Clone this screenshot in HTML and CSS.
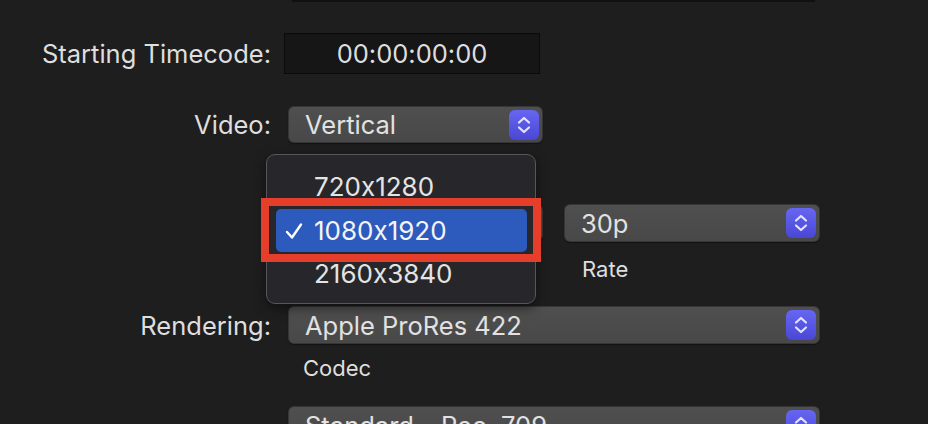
FILE: index.html
```html
<!DOCTYPE html>
<html>
<head>
<meta charset="utf-8">
<link rel="stylesheet" href="styles.css">
</head>
<body>
<div class="panel">
  <div class="prev-field"></div>

  <div class="row row-timecode">
    <div class="label">Starting Timecode:</div>
    <div class="timecode">00:00:00:00</div>
  </div>

  <div class="row row-video">
    <div class="label">Video:</div>
    <div class="popup popup-short">
      <span class="popup-text">Vertical</span>
      <span class="stepper"><svg viewBox="0 0 30 30" width="30" height="30"><path d="M10 12.5 L15 8 L20 12.5 M10 17.5 L15 22 L20 17.5" fill="none" stroke="#e4e3ff" stroke-width="2.2" stroke-linecap="round" stroke-linejoin="round"/></svg></span>
    </div>
  </div>

  <div class="row row-format">
    <div class="label"></div>
    <div class="pair">
      <div class="popup popup-short">
        <span class="popup-text"></span>
        <span class="stepper"><svg viewBox="0 0 30 30" width="30" height="30"><path d="M10 12.5 L15 8 L20 12.5 M10 17.5 L15 22 L20 17.5" fill="none" stroke="#e4e3ff" stroke-width="2.2" stroke-linecap="round" stroke-linejoin="round"/></svg></span>
      </div>
      <div class="popup popup-rate">
        <span class="popup-text">30p</span>
        <span class="stepper"><svg viewBox="0 0 30 30" width="30" height="30"><path d="M10 12.5 L15 8 L20 12.5 M10 17.5 L15 22 L20 17.5" fill="none" stroke="#e4e3ff" stroke-width="2.2" stroke-linecap="round" stroke-linejoin="round"/></svg></span>
      </div>
    </div>
  </div>
  <div class="row sub-row">
    <div class="label"></div>
    <div class="pair">
      <div class="sublabel sub-res"></div>
      <div class="sublabel sub-rate">Rate</div>
    </div>
  </div>

  <div class="row row-render">
    <div class="label">Rendering:</div>
    <div class="popup popup-wide">
      <span class="popup-text">Apple ProRes 422</span>
      <span class="stepper"><svg viewBox="0 0 30 30" width="30" height="30"><path d="M10 12.5 L15 8 L20 12.5 M10 17.5 L15 22 L20 17.5" fill="none" stroke="#e4e3ff" stroke-width="2.2" stroke-linecap="round" stroke-linejoin="round"/></svg></span>
    </div>
  </div>
  <div class="row sub-row sub-row-codec">
    <div class="label"></div>
    <div class="sublabel sub-codec">Codec</div>
  </div>

  <div class="row row-color">
    <div class="label"></div>
    <div class="popup popup-wide">
      <span class="popup-text">Standard – Rec. 709</span>
      <span class="stepper"><svg viewBox="0 0 30 30" width="30" height="30"><path d="M10 12.5 L15 8 L20 12.5 M10 17.5 L15 22 L20 17.5" fill="none" stroke="#e4e3ff" stroke-width="2.2" stroke-linecap="round" stroke-linejoin="round"/></svg></span>
    </div>
  </div>

  <div class="menu">
    <div class="menu-item">720x1280</div>
    <div class="menu-item selected"><svg class="check" viewBox="0 0 18 18" width="18" height="18"><path d="M2 10 L7 15.5 L16 2.5" fill="none" stroke="#ffffff" stroke-width="2.4" stroke-linecap="round" stroke-linejoin="round"/></svg>1080x1920</div>
    <div class="menu-item">2160x3840</div>
  </div>

  <div class="annotation"></div>
</div>
</body>
</html>
```

FILE: styles.css
```css
* { box-sizing: border-box; }

html, body {
  margin: 0;
  padding: 0;
  background: #1e1e1e;
}

body {
  width: 928px;
  height: 424px;
  overflow: hidden;
  font-family: "Inter", "Noto Sans", sans-serif;
  font-feature-settings: "calt" 0;
  color: #dddddd;
}

.panel {
  position: relative;
  width: 928px;
  height: 424px;
}

.prev-field {
  margin-left: 292px;
  width: 523px;
  height: 2px;
  background: #101010;
}

.row {
  display: grid;
  grid-template-columns: 271px auto;
  column-gap: 17px;
  align-items: center;
}

.label {
  text-align: right;
  font-size: 25.5px;
  color: #dedede;
  white-space: nowrap;
}

.row-timecode { margin-top: 31px; }

.timecode {
  margin-left: -4px;
  width: 256px;
  height: 41px;
  background: #161616;
  border: 1px solid #0a0a0a;
  display: flex;
  align-items: center;
  justify-content: center;
  font-size: 25.5px;
  color: #dedede;
}

.row-video { margin-top: 32px; }

.popup {
  height: 38px;
  border-radius: 6px;
  background: linear-gradient(#4f4f4f, #484848);
  border: 1px solid #363636;
  box-shadow: 0 1px 1px #121212;
  display: flex;
  align-items: center;
  justify-content: space-between;
  padding: 0 3px 0 16px;
}

.popup-text {
  font-size: 25.5px;
  color: #e2e2e2;
  white-space: nowrap;
}

.popup-short { width: 255px; height: 37px; }
.popup-rate { width: 256px; }
.popup-wide { width: 532px; }

.stepper {
  width: 30px;
  height: 30px;
  border-radius: 6px;
  background: linear-gradient(#6766f3, #4947d3);
  display: flex;
}

.row-format { margin-top: 61px; }

.pair {
  display: flex;
  gap: 21px;
}

.sub-row { margin-top: 13px; }

.sublabel {
  font-size: 22px;
  line-height: 28px;
  height: 28px;
  color: #dedede;
}

.sub-res { width: 255px; padding-left: 15px; }
.sub-rate { padding-left: 18px; }
.sub-codec { padding-left: 15px; }

.row-render { margin-top: 23px; }
.sub-row-codec { margin-top: 10px; }
.row-color { margin-top: 24px; }

.menu {
  position: absolute;
  left: 266px;
  top: 154px;
  width: 270px;
  height: 150px;
  background: #27272b;
  border: 1px solid #56565b;
  border-radius: 9px;
  box-shadow: 0 4px 12px rgba(0, 0, 0, 0.5);
  padding: 10px 8px 0 9px;
}

.menu-item {
  height: 43.5px;
  display: flex;
  align-items: center;
  padding-left: 38px;
  font-size: 26px;
  color: #e4e4e4;
  border-radius: 5px;
  position: relative;
}

.menu-item.selected {
  background: #2d5abd;
  color: #f4f4f4;
}

.check {
  position: absolute;
  left: 9px;
  top: 13px;
}

.annotation {
  position: absolute;
  left: 261px;
  top: 198px;
  width: 280px;
  height: 64px;
  border: 8px solid #e53e2b;
}
```
